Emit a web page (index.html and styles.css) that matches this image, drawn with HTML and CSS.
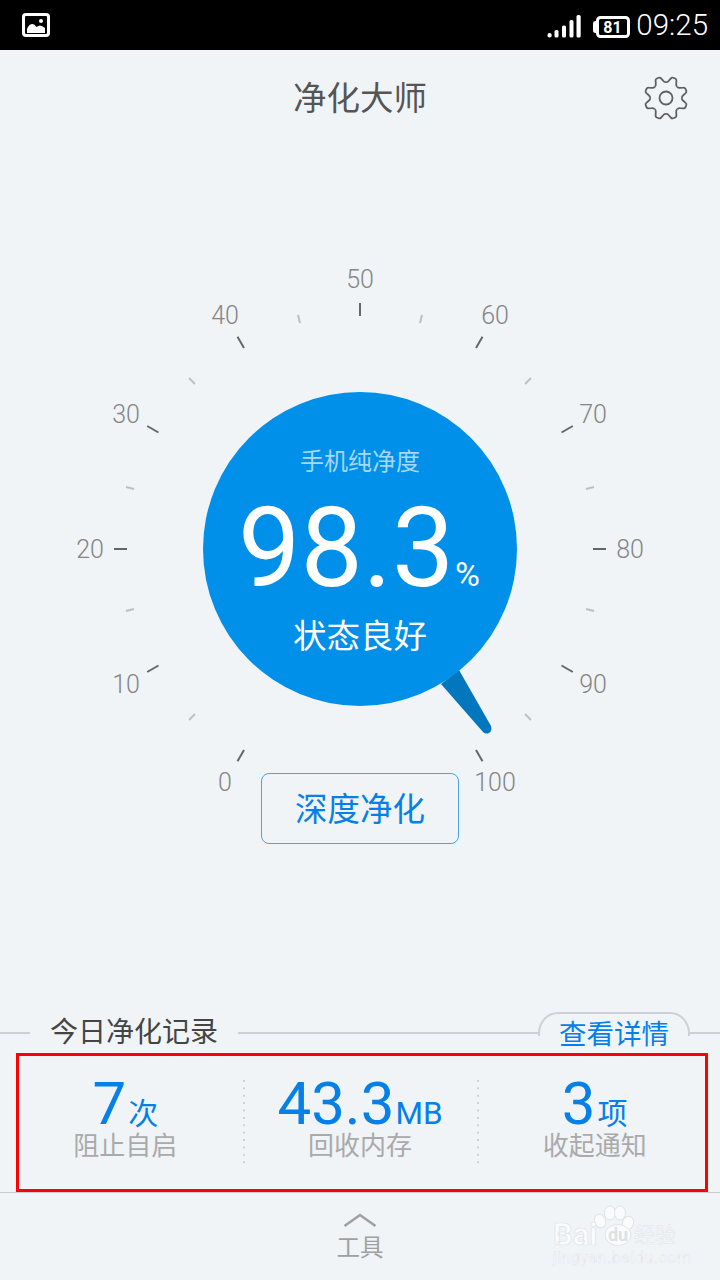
FILE: index.html
```html
<!DOCTYPE html>
<html lang="zh-CN">
<head>
<meta charset="utf-8">
<title>净化大师</title>
<link rel="stylesheet" href="styles.css">
</head>
<body>
<div class="screen">
  <div class="status">
    <svg class="pic-icon" width="28" height="24" viewBox="0 0 28 24">
      <rect x="1.500" y="1.500" width="25" height="21" rx="2.500" class="line-w"/>
      <path d="M5 20v-4q2-5 5.500-5 2 0 4 3 2-1.500 3.500-1.500 2 0 5 2.500v5z" class="fill-w"/>
      <circle cx="19" cy="8" r="2" class="fill-w"/>
    </svg>
    <div class="status-right">
      <svg class="signal" width="34" height="24" viewBox="0 0 34 24">
        <rect x="0.500" y="18" width="4.200" height="4.500" rx="2" class="fill-w"/>
        <rect x="7.500" y="15" width="4" height="7.500" rx="1.500" class="fill-w"/>
        <rect x="15" y="10.500" width="4" height="12" rx="1.500" class="fill-w"/>
        <rect x="22.500" y="5" width="4" height="17.500" rx="1.500" class="fill-w"/>
        <rect x="29.500" y="0" width="4.200" height="22.500" rx="1.500" class="fill-w"/>
      </svg>
      <svg class="battery" width="38" height="22" viewBox="0 0 38 22">
        <path d="M5 5H3.500Q1 5 1 8v7q0 2 2.500 2H5z" class="fill-w"/>
        <rect x="5.500" y="1.500" width="31" height="19" rx="3" class="line-w"/>
        <text x="20.500" y="17" class="batt-num">81</text>
      </svg>
      <span class="time">09:25</span>
    </div>
  </div>

  <header class="header">
    <h1 class="title">净化大师</h1>
    <svg class="gear" width="46" height="46" viewBox="-23 -23 46 46">
      <g class="gear-line">
        <path id="tooth" transform="rotate(22.500)" d="M-6.100-14.800Q-4.500-15-4-17L-3-20Q-2.600-21.500-1-21.500L1-21.500Q2.600-21.500 3-20L4-17Q4.500-15 6.100-14.800"/>
        <use href="#tooth" transform="rotate(45)"/>
        <use href="#tooth" transform="rotate(90)"/>
        <use href="#tooth" transform="rotate(135)"/>
        <use href="#tooth" transform="rotate(180)"/>
        <use href="#tooth" transform="rotate(225)"/>
        <use href="#tooth" transform="rotate(270)"/>
        <use href="#tooth" transform="rotate(315)"/>
        <circle r="6.500"/>
      </g>
    </svg>
  </header>

  <div class="dial">
    <svg class="dial-svg" width="720" height="629" viewBox="0 144 720 629">
      <g class="major">
        <path d="M360 303v13"/>
        <path d="M244 348l-6.500-11.300"/>
        <path d="M476 348l6.500-11.300"/>
        <path d="M158.500 432.500l-11.300-6.500"/>
        <path d="M561.500 432.500l11.300-6.500"/>
        <path d="M114 549h13"/>
        <path d="M593 549h13"/>
        <path d="M158.500 665.500l-11.300 6.500"/>
        <path d="M561.500 665.500l11.300 6.500"/>
        <path d="M244 750l-6.500 11.300"/>
        <path d="M476 750l6.500 11.300"/>
      </g>
      <g class="minor">
        <path d="M300 323l-2-8"/>
        <path d="M420 323l2-8"/>
        <path d="M195 384l-6-6"/>
        <path d="M525 384l6-6"/>
        <path d="M134 489l-8-2"/>
        <path d="M586 489l8-2"/>
        <path d="M134 609l-8 2"/>
        <path d="M586 609l8 2"/>
        <path d="M195 714l-6 6"/>
        <path d="M525 714l6 6"/>
      </g>
      <g class="labels">
        <text x="360" y="288">50</text>
        <text x="225" y="324">40</text>
        <text x="495" y="324">60</text>
        <text x="126" y="423">30</text>
        <text x="593" y="423">70</text>
        <text x="90" y="558">20</text>
        <text x="630" y="558">80</text>
        <text x="126" y="693">10</text>
        <text x="593" y="693">90</text>
        <text x="225" y="791">0</text>
        <text x="495" y="791">100</text>
      </g>
      <path class="needle" d="M441 684L459 670L491 726Q492.500 731 489 733Q485.500 734.500 483 732Z"/>
      <circle class="disc" cx="360" cy="549" r="157"/>
      <text class="disc-caption" x="360" y="470">手机纯净度</text>
      <text class="disc-value" x="238" y="586">98.3</text>
      <text class="disc-unit" x="455" y="586">%</text>
      <text class="disc-state" x="360" y="648">状态良好</text>
    </svg>
    <button class="deep">深度净化</button>
  </div>

  <section class="record">
    <span class="rule rule-left"></span>
    <h2 class="record-title">今日净化记录</h2>
    <span class="rule rule-grow"></span>
    <a class="tab">查看详情</a>
    <span class="rule rule-right"></span>
  </section>

  <section class="stats">
    <div class="stat">
      <div class="num">7<small>次</small></div>
      <div class="cap">阻止自启</div>
    </div>
    <div class="stat stat-sep">
      <div class="num">43.3<small class="latin">MB</small></div>
      <div class="cap">回收内存</div>
    </div>
    <div class="stat stat-sep">
      <div class="num">3<small>项</small></div>
      <div class="cap">收起通知</div>
    </div>
    <div class="redbox"></div>
  </section>

  <footer class="tools">
    <svg class="chevron" width="34" height="14" viewBox="0 0 34 14"><path d="M1.500 13L17 2l15.500 11"/></svg>
    <span class="tools-label">工具</span>
    <svg class="mark" width="150" height="78" viewBox="0 0 150 78">
      <g class="mark-paw">
        <ellipse cx="50" cy="20" rx="5.500" ry="7" transform="rotate(-20 50 20)"/>
        <ellipse cx="60" cy="12" rx="5.500" ry="7"/>
        <ellipse cx="70" cy="12" rx="5.500" ry="7"/>
        <ellipse cx="78" cy="22" rx="5.500" ry="7" transform="rotate(20 78 22)"/>
        <ellipse cx="68" cy="34" rx="13" ry="10.500"/>
      </g>
      <text class="mark-bai" x="3" y="44">Bai</text>
      <text class="mark-du" x="68" y="40">du</text>
      <text class="mark-cn" x="84" y="41">经验</text>
      <text class="mark-url" x="3" y="62">jingyan.baidu.com</text>
    </svg>
  </footer>
</div>
</body>
</html>
```

FILE: styles.css
```css
* { box-sizing: border-box; }
html, body { margin: 0; padding: 0; }
body {
  width: 720px;
  height: 1280px;
  overflow: hidden;
  background: #f0f4f7;
  font-family: Roboto, "Noto Sans CJK SC", sans-serif;
}
.screen { width: 720px; height: 1280px; display: flex; flex-direction: column; }

.status {
  height: 50px;
  flex: none;
  background: #000;
  display: flex;
  align-items: center;
  justify-content: space-between;
  padding: 0 12px 0 22px;
}
.status-right { display: flex; align-items: center; }
.line-w { fill: none; stroke: #fff; stroke-width: 3; }
.fill-w { fill: #fff; }
.signal { margin-top: 3px; }
.battery { margin-left: 11px; margin-top: 4px; }
.batt-num { fill: #fff; font: 700 16px Roboto, sans-serif; text-anchor: middle; }
.time { color: #fff; font-weight: 300; font-size: 29.500px; margin-left: 6px; line-height: 50px; }

.header {
  height: 94px;
  flex: none;
  position: relative;
  display: flex;
  align-items: center;
  justify-content: center;
}
.title { margin: 0; padding-top: 4px; font-size: 33.500px; font-weight: 400; color: #555; line-height: 90px; }
.gear { position: absolute; left: 643px; top: 25px; }
.gear-line path, .gear-line circle, .gear-line use { fill: none; stroke: #5f5f5f; stroke-width: 1.800; }

.dial { flex: none; height: 869px; display: flex; flex-direction: column; align-items: center; }
.dial-svg { display: block; overflow: visible; flex: none; }
.major path { stroke: #666; stroke-width: 2; fill: none; }
.minor path { stroke: #bfbfbf; stroke-width: 2; fill: none; }
.labels text { fill: #858585; font-size: 25px; font-weight: 300; text-anchor: middle; }
.needle { fill: #0277bd; }
.disc { fill: #0090ea; }
.disc-caption { fill: #a6d8f8; font-size: 24px; text-anchor: middle; }
.disc-value { fill: #fff; font-size: 111px; font-weight: 400; }
.disc-unit { fill: #fff; font-size: 34px; font-weight: 400; }
.disc-state { fill: #fff; font-size: 33.500px; text-anchor: middle; }
.deep {
  width: 198px;
  height: 71px;
  padding: 0 0 4px;
  background: transparent;
  border: 1px solid #4aa3ea;
  border-radius: 8px;
  color: #0580e8;
  font-family: "Noto Sans CJK SC", sans-serif;
  font-size: 32.500px;
}

.record { height: 40px; flex: none; display: flex; align-items: flex-start; position: relative; }
.rule { height: 2px; background: #cdd1d5; margin-top: 19px; flex: none; }
.rule-left { width: 30px; }
.rule-grow { flex: 1; }
.rule-right { width: 30px; }
.record-title { margin: 0; padding: 0 20px; font-size: 28px; font-weight: 400; color: #444; line-height: 40px; }
.tab {
  width: 152px;
  height: 40px;
  flex: none;
  position: relative;
  text-align: center;
  color: #0580e8;
  font-size: 27.500px;
  line-height: 44px;
}
.tab::before {
  content: "";
  position: absolute;
  left: 0;
  top: -1px;
  right: 0;
  height: 22px;
  border: 2px solid #cdd1d5;
  border-bottom: 0;
  border-radius: 20px 20px 0 0 / 21px 21px 0 0;
}

.stats {
  height: 139px;
  flex: none;
  position: relative;
  display: grid;
  grid-template-columns: 1fr 1fr 1fr;
  grid-template-rows: 85px;
  padding: 27px 8px;
}
.stat { text-align: center; }
.stat-sep {
  background-image: linear-gradient(#cfcfcf 2px, transparent 2px);
  background-size: 2px 7.400px;
  background-repeat: repeat-y;
  background-position: -0.500px 0;
}
.num { color: #0580e8; font-size: 60px; line-height: 47px; height: 47px; white-space: nowrap; }
.num small { font-size: 30px; margin-left: 2px; }
.num .latin { font-size: 31.500px; margin-left: 1px; }
.cap { color: #aaa; font-size: 26px; line-height: 38px; }
.redbox {
  position: absolute;
  left: 16px;
  top: 0;
  width: 692px;
  height: 139px;
  border: 3px solid #f00;
}

.tools {
  flex: 1;
  position: relative;
  border-top: 1px solid #ccc;
  display: flex;
  flex-direction: column;
  align-items: center;
  padding-top: 20px;
}
.chevron { display: block; flex: none; }
.chevron path { fill: none; stroke: #a0a0a0; stroke-width: 2.500; }
.tools-label { color: #a0a0a0; font-size: 23.500px; line-height: 34px; margin-top: 4px; }
.mark { position: absolute; left: 550px; top: 8px; }
.mark-paw { fill: #fafbfc; stroke: #e0e3e7; stroke-width: 1; }
.mark-bai { fill: #fafbfc; stroke: #e0e3e7; stroke-width: .7; font-size: 31px; font-weight: 700; }
.mark-du { fill: #dde1e5; font-size: 18px; font-weight: 700; text-anchor: middle; }
.mark-cn { fill: #fafbfc; stroke: #e0e3e7; stroke-width: .5; font-size: 21px; }
.mark-url { fill: #fafbfc; stroke: #e0e3e7; stroke-width: .4; font-size: 16px; letter-spacing: 0.500px; }
```
